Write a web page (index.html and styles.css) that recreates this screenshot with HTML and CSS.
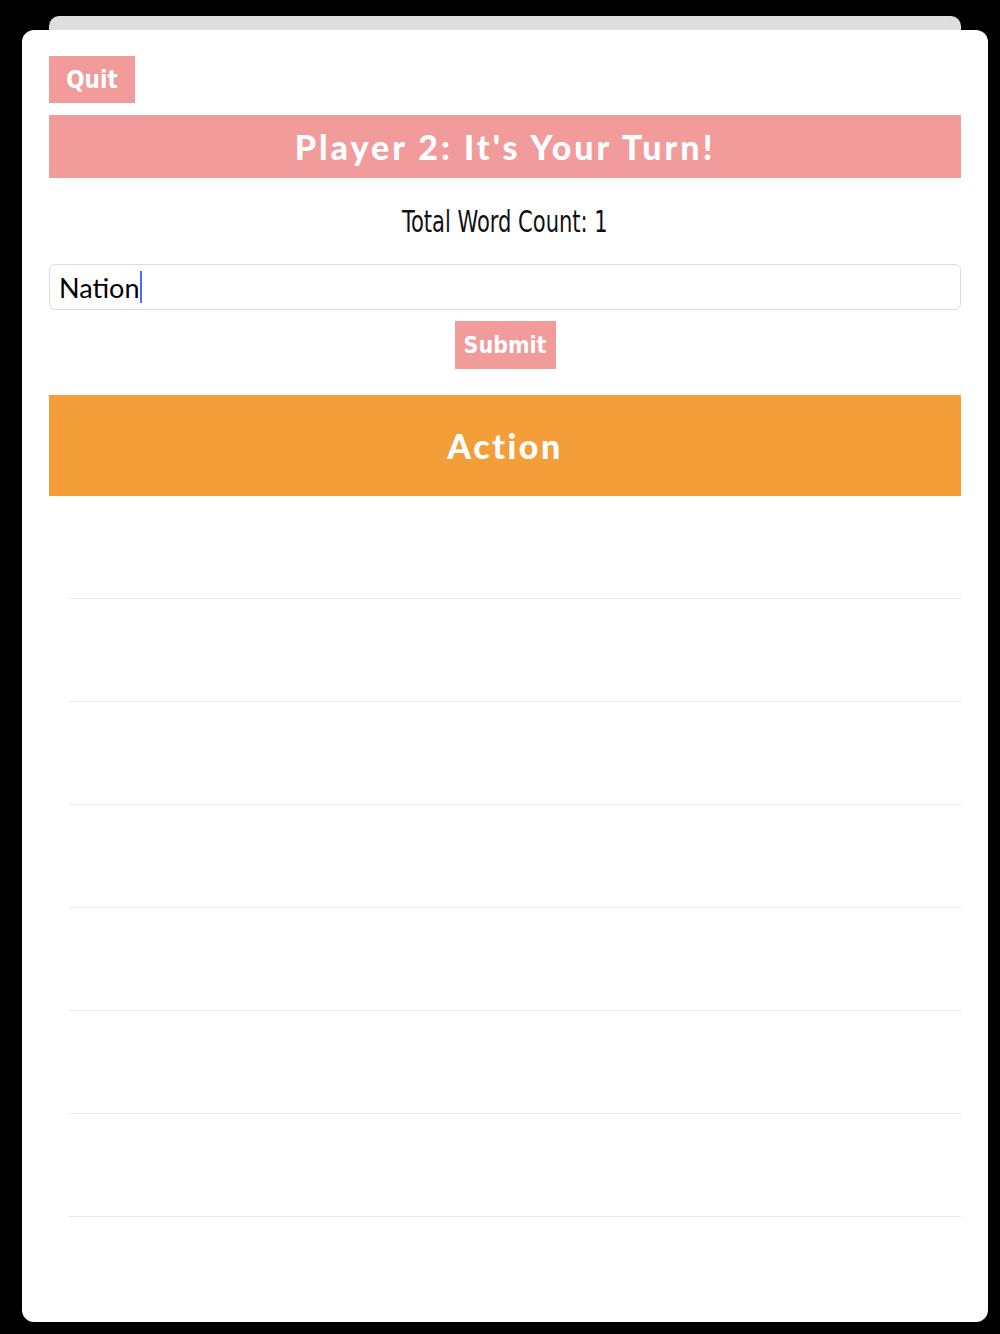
FILE: index.html
```html
<!DOCTYPE html>
<html lang="en">
<head>
    <meta charset="UTF-8" />
    <title>Word Game</title>
    <link rel="stylesheet" href="styles.css">
</head>
<body>
<div class="sheet-back"></div>
<div class="sheet">
    <div class="top-row">
        <button class="btn quit">Quit</button>
    </div>
    <div class="turn-bar">Player 2: It's Your Turn!</div>
    <div class="count"><span>Total Word Count: 1</span></div>
    <div class="word-input">Nation<span class="caret"></span></div>
    <div class="submit-row">
        <button class="btn submit">Submit</button>
    </div>
    <div class="category">Action</div>
    <ul class="word-list">
        <li></li>
        <li></li>
        <li></li>
        <li></li>
        <li></li>
        <li></li>
        <li></li>
    </ul>
</div>
</body>
</html>
```
FILE: styles.css
```css
html, body {
    margin: 0;
    height: 100%;
    background: #000;
}
body {
    font-family: Lato, "Noto Sans", sans-serif;
    color: #111;
    padding: 16px 0 0;
    box-sizing: border-box;
}
.sheet-back {
    margin: 0 39px 0 49px;
    height: 14px;
    background: #dedede;
    border-radius: 10px 10px 0 0;
}
.sheet {
    margin: 0 12px 0 22px;
    height: 1292px;
    background: #fff;
    border-radius: 12px;
    padding: 26px 27px 0;
    box-sizing: border-box;
}
.btn {
    border: none;
    background: #f29b9b;
    color: #fff;
    font-family: "DejaVu Sans", sans-serif;
    font-stretch: condensed;
    font-weight: bold;
    font-size: 24px;
    padding: 0;
    cursor: pointer;
}
.quit {
    width: 86px;
    height: 47px;
}
.submit {
    width: 101px;
    height: 48px;
    font-size: 23px;
}
.turn-bar {
    margin-top: 12px;
    height: 63px;
    background: #f29b9b;
    color: #fff;
    font-weight: 900;
    font-size: 34px;
    letter-spacing: 3px;
    display: flex;
    align-items: center;
    justify-content: center;
}
.count {
    height: 86px;
    display: flex;
    align-items: center;
    justify-content: center;
    font-family: "DejaVu Sans", sans-serif;
    font-stretch: condensed;
    font-size: 30px;
}
.count span {
    display: inline-block;
    transform: scaleX(0.78);
}
.word-input {
    height: 44px;
    border: 1px solid #dcdcdc;
    border-radius: 6px;
    padding: 0 9px;
    display: flex;
    align-items: center;
    font-size: 27px;
    color: #000;
}
.caret {
    display: inline-block;
    width: 2px;
    height: 32px;
    background: #4a6cf7;
    margin-left: 1px;
}
.submit-row {
    display: flex;
    justify-content: center;
    padding-top: 11px;
}
.category {
    margin-top: 26px;
    height: 101px;
    background: #f39e38;
    color: #fff;
    font-weight: 900;
    font-size: 34px;
    letter-spacing: 2.5px;
    display: flex;
    align-items: center;
    justify-content: center;
}
.word-list {
    list-style: none;
    margin: 0;
    padding: 0 0 0 20px;
}
.word-list li {
    height: 102px;
    border-bottom: 1px solid #e6e6e6;
}
```
